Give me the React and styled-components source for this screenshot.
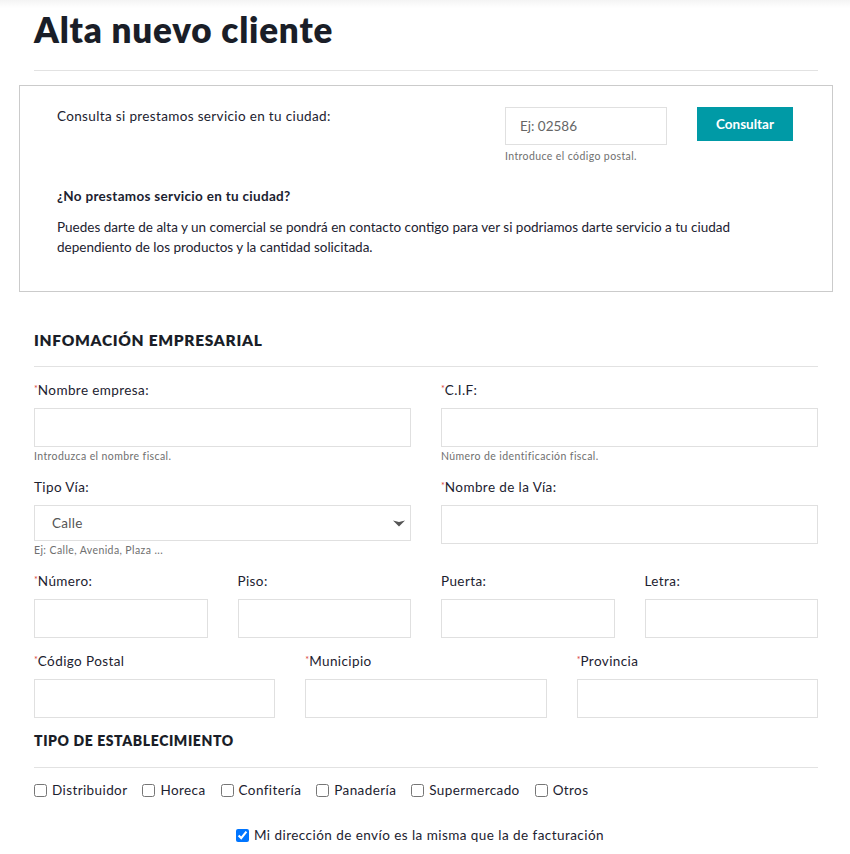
import React from "react";
import styled, { createGlobalStyle } from "styled-components";

const GlobalStyle = createGlobalStyle`
  body {
    margin: 0;
    background: #fff;
    font-family: Lato, "Open Sans", sans-serif;
    color: #1c2230;
  }
  * { box-sizing: border-box; }
`;

const Page = styled.div`
  background: linear-gradient(#f4f4f4, #fff 8px);
  padding-top: 10px;
  padding-bottom: 20px;
`;

const Container = styled.div`
  width: 784px;
  margin: 0 32px 0 34px;
`;

const Title = styled.h1`
  margin: 0;
  font-size: 35px;
  font-weight: 800;
  letter-spacing: 0.8px;
  line-height: 38px;
  color: #1a1e28;
`;

const Rule = styled.hr`
  border: 0;
  border-top: 1px solid #e2e2e2;
  margin: ${(p) => p.$m || "22px 0 0"};
`;

const CheckBox = styled.div`
  margin: 14px -15px 0;
  border: 1px solid #cbcbcb;
  padding: 21px 39px 34px 37px;
`;

const CheckRow = styled.div`
  display: flex;
  align-items: flex-start;
`;

const Lead = styled.p`
  flex: 1;
  margin: 0;
  padding-top: 1px;
  font-size: 13.5px;
  letter-spacing: 0.35px;
  line-height: 16px;
`;

const PostalGroup = styled.div`
  width: 162px;
  margin-right: 30px;
`;

const Input = styled.input`
  display: block;
  width: 100%;
  height: ${(p) => p.$h || 39}px;
  border: 1px solid #e0e0e0;
  background: #fff;
  padding: 0 14px;
  font-family: inherit;
  font-size: 13.5px;
  color: #333;
  outline: none;
  &::placeholder { color: #666; }
`;

const Hint = styled.div`
  margin-top: ${(p) => p.$mt || 4}px;
  font-size: 10.5px;
  letter-spacing: 0.4px;
  line-height: 12px;
  color: #6f6f6f;
`;

const Button = styled.button`
  width: 96px;
  height: 34px;
  border: 0;
  background: #009aa6;
  color: #fff;
  font-family: inherit;
  font-size: 13.5px;
  font-weight: 700;
  cursor: pointer;
`;

const Question = styled.h4`
  margin: 26px 0 0;
  font-size: 13.5px;
  font-weight: 700;
  letter-spacing: 0.3px;
  line-height: 16px;
`;

const Para = styled.p`
  margin: 13px 0 0;
  font-size: 13.5px;
  line-height: 20px;
`;

const SectionTitle = styled.h3`
  margin: ${(p) => p.$mt || 39}px 0 0;
  font-size: ${(p) => p.$size || 15.5}px;
  font-weight: 800;
  letter-spacing: ${(p) => p.$ls || 0.7}px;
  line-height: 18px;
  text-transform: uppercase;
  color: #1a1e28;
`;

const Grid = styled.div`
  display: grid;
  grid-template-columns: repeat(${(p) => p.$cols}, 1fr);
  column-gap: 30px;
  margin-top: ${(p) => p.$mt || 14}px;
`;

const Field = styled.div`
  display: flex;
  flex-direction: column;
`;

const Label = styled.label`
  font-size: 13.5px;
  letter-spacing: 0.4px;
  line-height: 16px;
  margin-bottom: 10px;
  color: #1c2230;
`;

const Req = styled.span`
  position: relative;
  top: -3px;
  color: #d9423b;
  font-size: 9px;
  line-height: 0;
  letter-spacing: 0;
`;

const SelectWrap = styled.div`
  position: relative;
`;

const Select = styled.select`
  display: block;
  width: 100%;
  height: 36px;
  border: 1px solid #e0e0e0;
  background: #fff;
  padding: 0 17px;
  font-family: inherit;
  font-size: 13.5px;
  letter-spacing: 0.3px;
  color: #555;
  appearance: none;
  outline: none;
`;

const Arrow = styled.svg`
  position: absolute;
  right: 6px;
  top: 15px;
  pointer-events: none;
`;

const Types = styled.div`
  display: flex;
  gap: 15px;
  margin-top: 14px;
`;

const Opt = styled.label`
  display: flex;
  align-items: center;
  gap: 5px;
  font-size: 13.5px;
  letter-spacing: 0.4px;
  line-height: 16px;
  color: #1c2230;
  input {
    margin: 0;
    width: 13px;
    height: 13px;
  }
`;

const Same = styled(Opt)`
  justify-content: center;
  margin-top: 29px;
  padding-right: 12px;
  letter-spacing: 0.45px;
  input { accent-color: #0075ff; }
`;

function TextField({ label, required, hint }) {
  return (
    <Field>
      <Label>
        {required && <Req>*</Req>}
        {label}
      </Label>
      <Input />
      {hint && <Hint $mt={3}>{hint}</Hint>}
    </Field>
  );
}

export default function App() {
  const tipos = ["Distribuidor", "Horeca", "Confitería", "Panadería", "Supermercado", "Otros"];
  return (
    <>
      <GlobalStyle />
      <Page>
        <Container>
          <Title>Alta nuevo cliente</Title>
          <Rule />
          <CheckBox>
            <CheckRow>
              <Lead>Consulta si prestamos servicio en tu ciudad:</Lead>
              <PostalGroup>
                <Input $h={38} placeholder="Ej: 02586" />
                <Hint $mt={5}>Introduce el código postal.</Hint>
              </PostalGroup>
              <Button>Consultar</Button>
            </CheckRow>
            <Question>¿No prestamos servicio en tu ciudad?</Question>
            <Para>
              Puedes darte de alta y un comercial se pondrá en contacto contigo para ver si podriamos darte
              servicio a tu ciudad dependiento de los productos y la cantidad solicitada.
            </Para>
          </CheckBox>

          <SectionTitle>Infomación Empresarial</SectionTitle>
          <Rule $m="17px 0 0" />

          <Grid $cols={2} $mt={15}>
            <TextField required label="Nombre empresa:" hint="Introduzca el nombre fiscal." />
            <TextField required label="C.I.F:" hint="Número de identificación fiscal." />
          </Grid>

          <Grid $cols={2} $mt={17}>
            <Field>
              <Label>Tipo Vía:</Label>
              <SelectWrap>
                <Select defaultValue="Calle">
                  <option>Calle</option>
                  <option>Avenida</option>
                  <option>Plaza</option>
                </Select>
                <Arrow width="12" height="7" viewBox="0 0 12 7">
                  <path d="M0 0.5 L6 6.5 L12 0.5 L6 2 Z" fill="#555" />
                </Arrow>
              </SelectWrap>
              <Hint $mt={3}>Ej: Calle, Avenida, Plaza ...</Hint>
            </Field>
            <TextField required label="Nombre de la Vía:" />
          </Grid>

          <Grid $cols={4} $mt={17}>
            <TextField required label="Número:" />
            <TextField label="Piso:" />
            <TextField label="Puerta:" />
            <TextField label="Letra:" />
          </Grid>

          <Grid $cols={3} $mt={15}>
            <TextField required label="Código Postal" />
            <TextField required label="Municipio" />
            <TextField required label="Provincia" />
          </Grid>

          <SectionTitle $mt={14} $size={14} $ls={0.6}>Tipo de establecimiento</SectionTitle>
          <Rule $m="17px 0 0" />

          <Types>
            {tipos.map((t) => (
              <Opt key={t}>
                <input type="checkbox" />
                {t}
              </Opt>
            ))}
          </Types>

          <Same>
            <input type="checkbox" defaultChecked />
            Mi dirección de envío es la misma que la de facturación
          </Same>
        </Container>
      </Page>
    </>
  );
}
